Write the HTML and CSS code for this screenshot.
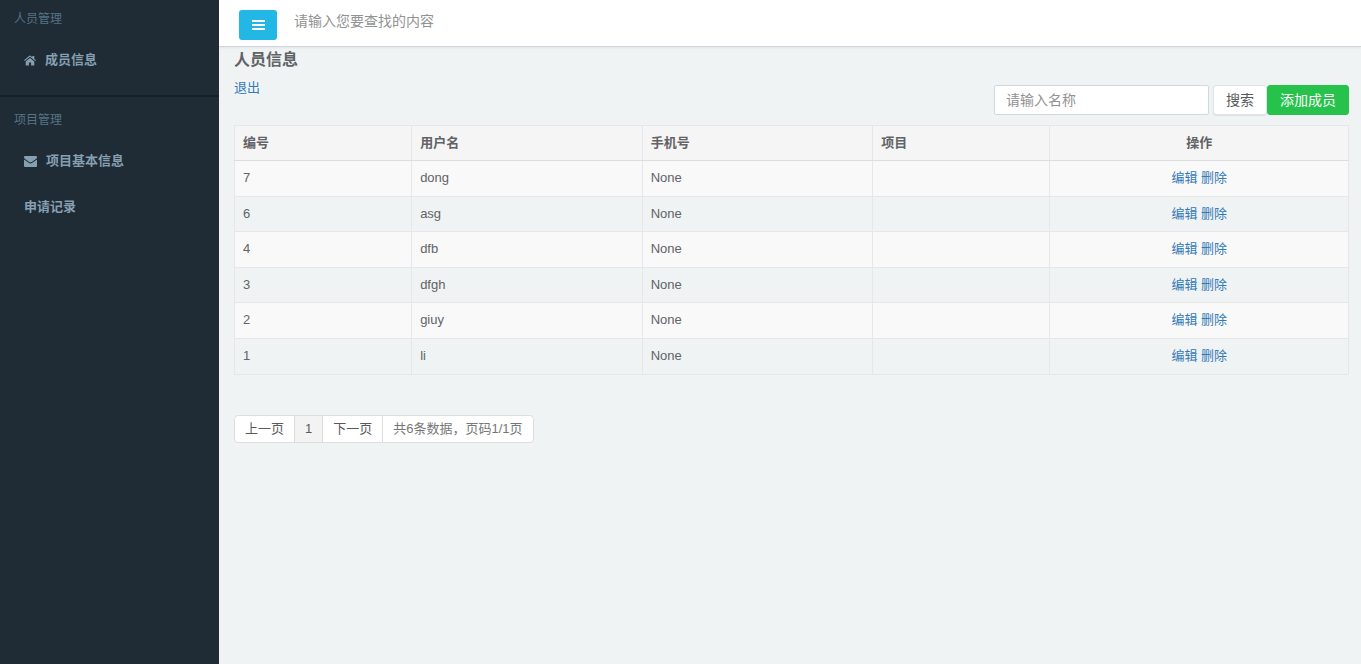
FILE: index.html
```html
<!DOCTYPE html>
<html lang="zh-CN">
<head>
<meta charset="utf-8">
<meta name="viewport" content="width=device-width, initial-scale=1">
<title>人员信息</title>
<link rel="stylesheet" href="styles.css">
</head>
<body>
<div class="app">
  <aside class="sidebar">
    <nav class="nav-group">
      <h2 class="nav-title">人员管理</h2>
      <a class="nav-link" href="#">
        <svg class="icon-home" viewBox="0 0 12 10" aria-hidden="true"><path d="M6 2.500 10.300 6v3.500a.5.5 0 0 1-.5.5H7.100V7H4.900v3H2.200a.5.5 0 0 1-.5-.5V6zM5.400.3a.9.9 0 0 1 1.200 0L8.300 1.700V.6h2v2.800L12 4.800l-.7.8L6 1.300.7 5.600 0 4.800z"/></svg>
        <span>成员信息</span>
      </a>
    </nav>
    <nav class="nav-group">
      <h2 class="nav-title">项目管理</h2>
      <a class="nav-link" href="#">
        <svg class="icon-mail" viewBox="0 0 13 11" aria-hidden="true"><path d="M1 0h11a1 1 0 0 1 1 1c0 1-.6 1.700-1.400 2.300L7.800 6Q6.500 6.800 5.200 6L1.400 3.300C.6 2.700 0 2 0 1a1 1 0 0 1 1-1zM0 3.400 4.700 6.800Q6.500 8 8.300 6.800L13 3.400V10a1 1 0 0 1-1 1H1a1 1 0 0 1-1-1z"/></svg>
        <span>项目基本信息</span>
      </a>
      <a class="nav-link" href="#">申请记录</a>
    </nav>
  </aside>
  <div class="page">
    <header class="topbar">
      <button class="menu-button" type="button" aria-label="菜单">
        <svg class="icon-menu" viewBox="0 0 13 10" aria-hidden="true"><path d="M0 0h13v2H0zM0 4h13v2H0zM0 8h13v2H0z"/></svg>
      </button>
      <input class="top-search" type="text" placeholder="请输入您要查找的内容" aria-label="请输入您要查找的内容">
    </header>
    <main class="content">
      <h1 class="page-title">人员信息</h1>
      <a class="link" href="#">退出</a>
      <form class="toolbar">
        <input class="name-input" type="text" placeholder="请输入名称" aria-label="请输入名称">
        <div class="actions">
          <button class="button" type="button">搜索</button>
          <button class="button button-add" type="button">添加成员</button>
        </div>
      </form>
      <table class="members">
        <colgroup>
          <col class="col-id"><col class="col-user"><col class="col-phone"><col class="col-project"><col class="col-actions">
        </colgroup>
        <thead>
          <tr><th>编号</th><th>用户名</th><th>手机号</th><th>项目</th><th class="center">操作</th></tr>
        </thead>
        <tbody>
          <tr><td>7</td><td>dong</td><td>None</td><td></td><td class="center"><a class="link" href="#">编辑</a> <a class="link" href="#">删除</a></td></tr>
          <tr><td>6</td><td>asg</td><td>None</td><td></td><td class="center"><a class="link" href="#">编辑</a> <a class="link" href="#">删除</a></td></tr>
          <tr><td>4</td><td>dfb</td><td>None</td><td></td><td class="center"><a class="link" href="#">编辑</a> <a class="link" href="#">删除</a></td></tr>
          <tr><td>3</td><td>dfgh</td><td>None</td><td></td><td class="center"><a class="link" href="#">编辑</a> <a class="link" href="#">删除</a></td></tr>
          <tr><td>2</td><td>giuy</td><td>None</td><td></td><td class="center"><a class="link" href="#">编辑</a> <a class="link" href="#">删除</a></td></tr>
          <tr><td>1</td><td>li</td><td>None</td><td></td><td class="center"><a class="link" href="#">编辑</a> <a class="link" href="#">删除</a></td></tr>
        </tbody>
      </table>
      <nav class="pager" aria-label="分页">
        <a class="pager-item" href="#">上一页</a>
        <a class="pager-item current" href="#" aria-current="page">1</a>
        <a class="pager-item" href="#">下一页</a>
        <span class="pager-item summary">共6条数据，页码1/1页</span>
      </nav>
    </main>
  </div>
</div>
</body>
</html>
```

FILE: styles.css
```css
* {
  box-sizing: border-box;
}

body {
  margin: 0;
  background: #eff3f4;
  color: #616366;
  font-family: "Liberation Sans", "Noto Sans CJK SC", sans-serif;
  font-size: 13px;
  line-height: 1.43;
}

input,
button {
  font: inherit;
}

.app {
  display: flex;
  min-height: 100vh;
}

.sidebar {
  flex: 0 0 219px;
  z-index: 1;
  background: #1f2b35;
}

.nav-group {
  padding: 9px 0 12px;
}

.nav-group + .nav-group {
  padding-top: 13px;
  border-top: 2px solid #16202a;
}

.nav-title {
  margin: 0 0 8px;
  padding: 0 14px;
  color: #587386;
  font-size: 12px;
  font-weight: 400;
  line-height: 20px;
}

.nav-link {
  display: flex;
  align-items: center;
  gap: 9px;
  height: 46px;
  padding: 0 24px;
  color: #869fb1;
  font-weight: 700;
  text-decoration: none;
}

.icon-home,
.icon-mail {
  height: 11px;
  fill: currentColor;
}

.icon-home {
  width: 12px;
}

.icon-mail {
  width: 13px;
}

.page {
  flex: 1;
  min-width: 0;
}

.topbar {
  display: flex;
  align-items: flex-start;
  gap: 17px;
  height: 47px;
  padding: 10px 20px 0;
  background: #fff;
  border-bottom: 1px solid #cfd5d9;
  box-shadow: 0 1px 2px #e2e6e8;
}

.menu-button {
  display: flex;
  align-items: center;
  justify-content: center;
  width: 38px;
  height: 30px;
  padding: 0;
  border: 0;
  border-radius: 3px;
  background: #23b7e5;
}

.icon-menu {
  width: 13px;
  height: 10px;
  fill: #fff;
}

.top-search {
  flex: 1;
  height: 22px;
  padding: 0;
  border: 0;
  outline: 0;
  font-size: 14px;
}

input::placeholder {
  color: #929292;
  opacity: 1;
}

.content {
  padding: 1px 12px 20px 15px;
}

.page-title {
  margin: 0 0 7px;
  font-size: 16px;
  font-weight: 700;
  line-height: 24px;
}

.link {
  color: #337ab7;
  text-decoration: none;
}

.toolbar {
  display: flex;
  justify-content: flex-end;
  gap: 4px;
  margin: -13px 0 10px;
}

.name-input {
  width: 215px;
  height: 30px;
  padding: 0 11px;
  border: 1px solid #cfdadd;
  border-radius: 2px;
  background: #fff;
  font-size: 14px;
}

.actions {
  display: flex;
}

.button {
  height: 30px;
  padding: 0 12px;
  border: 1px solid #dee5e7;
  border-radius: 3px;
  background: #fff;
  box-shadow: 0 1px 1px #dce1e3;
  color: #58595b;
  font-size: 14px;
}

.button-add {
  border-color: #27c24c;
  background: #27c24c;
  box-shadow: none;
  color: #fff;
}

.members {
  width: 100%;
  border-collapse: collapse;
  table-layout: fixed;
}

.col-id,
.col-project {
  width: 15.9%;
}

.col-user,
.col-phone {
  width: 20.7%;
}

.members th,
.members td {
  padding: 8px;
  border: 1px solid #e5e7e8;
  text-align: left;
}

.members th {
  border-bottom-color: #dcdddd;
  background: #f5f5f5;
}

.members tbody tr:nth-child(odd) {
  background: #f9f9f9;
}

.members .center {
  text-align: center;
}

.pager {
  display: inline-flex;
  margin-top: 40px;
  overflow: hidden;
  border: 1px solid #ddd;
  border-radius: 4px;
  background: #fff;
}

.pager-item {
  padding: 3px 10px;
  color: #58595b;
  line-height: 20px;
  text-decoration: none;
}

.pager-item + .pager-item {
  border-left: 1px solid #ddd;
}

.current {
  background: #f3f3f3;
}

.summary {
  color: #777;
}
```
